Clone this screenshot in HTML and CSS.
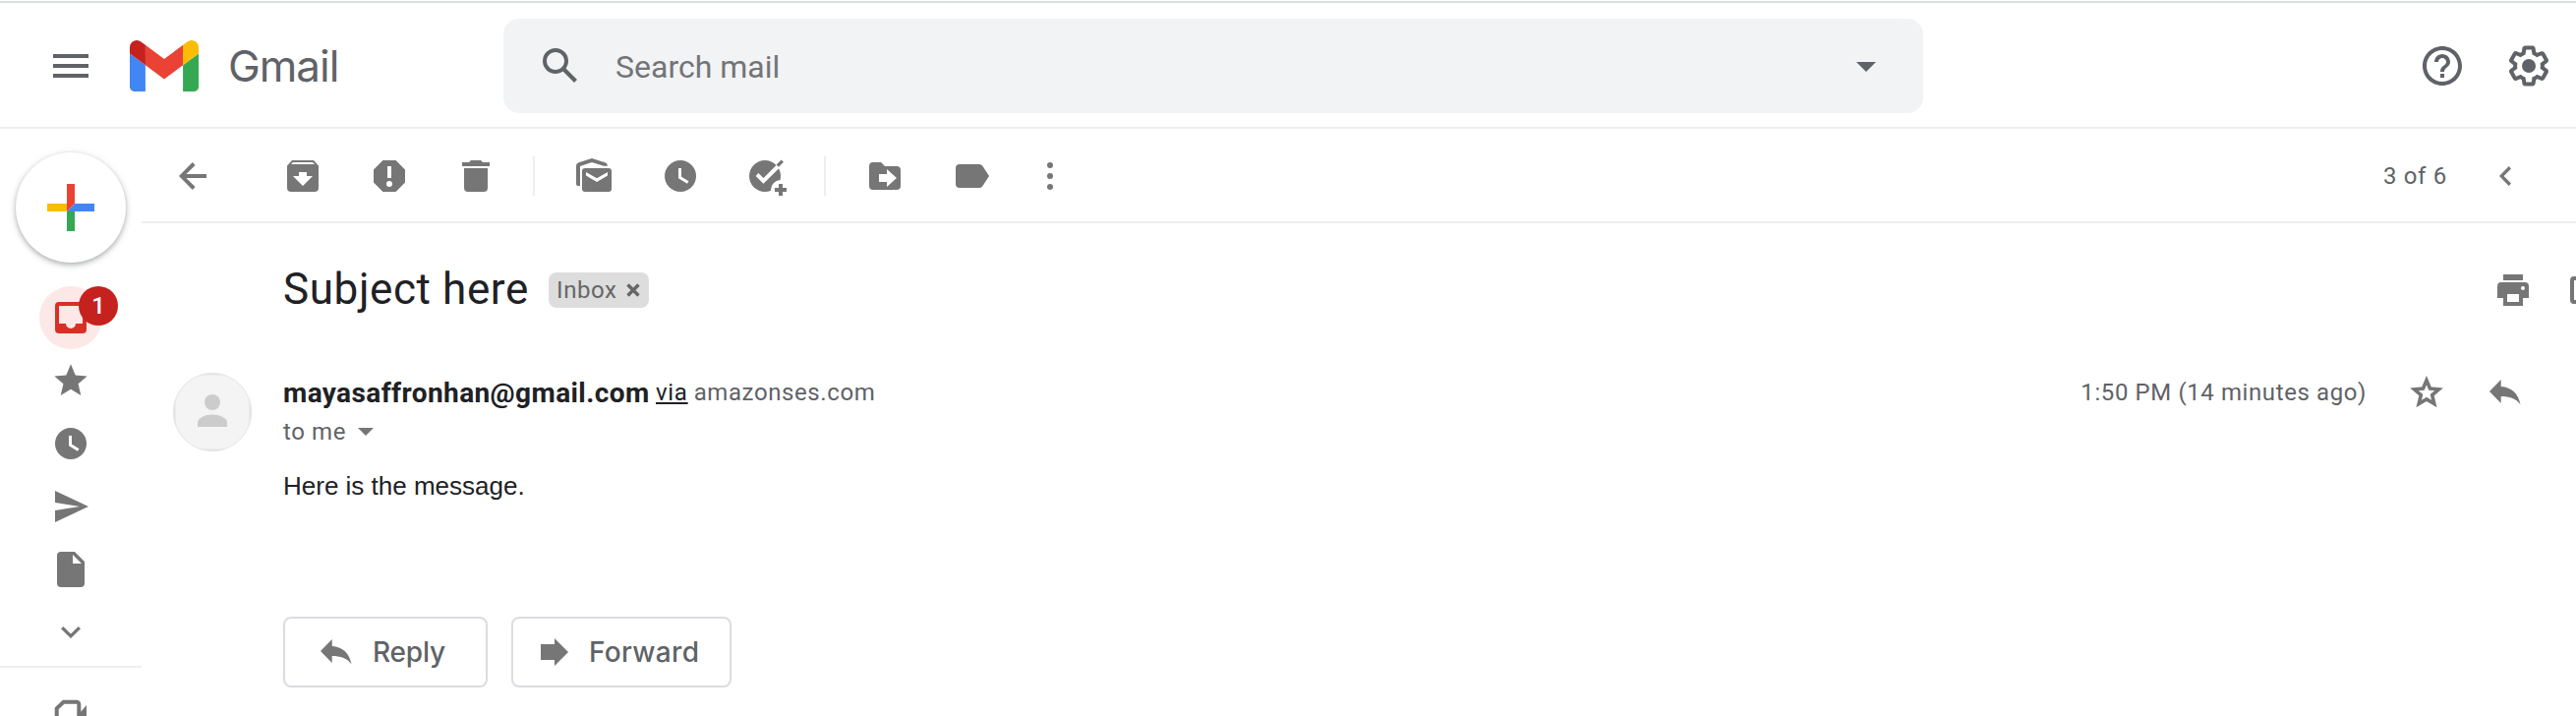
FILE: index.html
```html
<!DOCTYPE html>
<html lang="en">
<head>
<meta charset="utf-8">
<title>Gmail</title>
<link rel="stylesheet" href="styles.css">
</head>
<body>
<header class="topbar">
  <svg class="menu" viewBox="0 0 36 24"><path d="M0 0h36v4H0zM0 10h36v4H0zM0 20h36v4H0z"/></svg>
  <svg class="logo" viewBox="52 42 88 66" preserveAspectRatio="none">
    <path fill="#4285f4" d="M58 108h14V74L52 59v43c0 3.32 2.69 6 6 6"/>
    <path fill="#34a853" d="M120 108h14c3.32 0 6-2.69 6-6V59l-20 15"/>
    <path fill="#fbbc04" d="M120 48v26l20-15v-8c0-7.42-8.47-11.65-14.4-7.2"/>
    <path fill="#ea4335" d="M72 74V48l24 18 24-18v26L96 92"/>
    <path fill="#c5221f" d="M52 51v8l20 15V48l-5.6-4.2c-5.94-4.45-14.4-.22-14.4 7.2"/>
  </svg>
  <span class="brand">Gmail</span>
  <div class="search">
    <svg class="icon-lg" viewBox="0 0 24 24"><path d="M20.49 19l-5.73-5.73C15.53 12.2 16 10.91 16 9.5A6.5 6.5 0 1 0 9.5 16c1.41 0 2.7-.47 3.77-1.24L19 20.49 20.49 19zM5 9.5C5 7.01 7.01 5 9.5 5S14 7.01 14 9.5 11.99 14 9.5 14 5 11.99 5 9.5z"/></svg>
    <span class="placeholder">Search mail</span>
    <svg class="icon-lg" viewBox="0 0 24 24"><path d="M7 10l5 5 5-5z"/></svg>
  </div>
  <div class="top-actions">
    <svg class="icon-lg" viewBox="0 0 24 24"><path d="M11 18h2v-2h-2v2zm1-16C6.48 2 2 6.48 2 12s4.48 10 10 10 10-4.48 10-10S17.52 2 12 2zm0 18c-4.41 0-8-3.59-8-8s3.59-8 8-8 8 3.59 8 8-3.59 8-8 8zm0-14c-2.21 0-4 1.79-4 4h2c0-1.1.9-2 2-2s2 .9 2 2c0 2-3 1.75-3 5h2c0-2.25 3-2.5 3-5 0-2.21-1.79-4-4-4z"/></svg>
    <svg class="icon-lg" viewBox="0 0 24 24"><path d="M13.85 22.25h-3.7c-.74 0-1.36-.54-1.45-1.27l-.27-1.89c-.27-.14-.53-.29-.79-.46l-1.8.72c-.7.26-1.47-.03-1.81-.65L2.2 15.53c-.35-.66-.2-1.44.36-1.88l1.53-1.19c-.01-.15-.02-.3-.02-.46 0-.15.01-.31.02-.46l-1.52-1.19c-.59-.45-.74-1.26-.37-1.88l1.85-3.19c.34-.62 1.11-.9 1.79-.63l1.81.73c.26-.17.52-.32.78-.46l.27-1.91c.09-.7.71-1.25 1.44-1.25h3.7c.74 0 1.36.54 1.45 1.27l.27 1.89c.27.14.53.29.79.46l1.8-.72c.71-.26 1.48.03 1.82.65l1.84 3.18c.36.66.2 1.44-.36 1.88l-1.52 1.19c.01.15.02.3.02.46s-.01.31-.02.46l1.52 1.19c.56.45.72 1.23.37 1.86l-1.86 3.22c-.34.62-1.11.9-1.8.63l-1.8-.72c-.26.17-.52.32-.78.46l-.27 1.91c-.1.68-.72 1.22-1.46 1.22zm-3.23-2h2.76l.37-2.55.53-.22c.44-.18.88-.44 1.34-.78l.45-.34 2.38.96 1.38-2.4-2.03-1.58.07-.56c.03-.26.06-.51.06-.78s-.03-.53-.06-.78l-.07-.56 2.03-1.58-1.39-2.4-2.39.96-.45-.35c-.42-.32-.87-.58-1.33-.77l-.52-.22-.37-2.55h-2.76l-.37 2.55-.53.21c-.44.19-.88.44-1.34.79l-.45.33-2.38-.95-1.39 2.39 2.03 1.58-.07.56a7 7 0 0 0-.06.79c0 .26.02.53.06.78l.07.56-2.03 1.58 1.38 2.4 2.39-.96.45.35c.43.33.86.58 1.33.77l.53.22.38 2.55z"/><circle cx="12" cy="12" r="3.5"/></svg>
  </div>
</header>
<div class="shell">
  <nav class="rail">
    <div class="compose">
      <svg viewBox="0 0 48 48"><path fill="#fbbc04" d="M0 20h20v8H0z"/><path fill="#34a853" d="M20 28h8v20h-8z"/><path fill="#4285f4" d="M28 20h20v8H20z"/><path fill="#ea4335" d="M20 0h8v20l-8 8z"/></svg>
    </div>
    <div class="rail-item active">
      <svg class="icon" viewBox="0 0 40 40"><path d="M8 4h24a4 4 0 0 1 4 4v24a4 4 0 0 1-4 4H8a4 4 0 0 1-4-4V8a4 4 0 0 1 4-4zM8 8v18h7a5 5 0 0 0 10 0h7V8z"/></svg>
      <span class="badge">1</span>
    </div>
    <div class="rail-item"><svg class="icon" viewBox="0 0 24 24"><path d="M12 17.27L18.18 21l-1.64-7.03L22 9.24l-7.19-.61L12 2 9.19 8.63 2 9.24l5.46 4.73L5.82 21z"/></svg></div>
    <div class="rail-item"><svg class="icon" viewBox="0 0 40 40"><circle cx="20" cy="20" r="16"/><path class="cut" d="M19.5 12v9.5l8.2 5"/></svg></div>
    <div class="rail-item"><svg class="icon" viewBox="0 0 40 40"><path d="M4 4l34 16L4 36V24l25-4-25-4z"/></svg></div>
    <div class="rail-item"><svg class="icon" viewBox="0 0 40 40"><path d="M10 2h14l10 10v22a4 4 0 0 1-4 4H10a4 4 0 0 1-4-4V6a4 4 0 0 1 4-4zM22 5v9h9z"/></svg></div>
    <div class="rail-item"><svg class="icon" viewBox="0 0 40 40"><path d="M10 16.3 12.3 14l7.7 7.4 7.7-7.4 2.3 2.3L20 26z"/></svg></div>
    <div class="meet"><svg class="icon" viewBox="0 0 40 40"><path class="line" d="M5.7 34V12.4L12.6 5.8H26a2.3 2.3 0 0 1 2.3 2.3V34z"/><path d="M29 17l7-8v22l-7-7z"/></svg></div>
  </nav>
  <main class="content">
    <div class="toolbar">
      <svg class="icon back" viewBox="0 0 40 40"><path d="M6 20 19.8 6l2.8 2.9L13.4 18H34v4H13.4l9.2 9.1-2.8 2.9z"/></svg>
      <div class="group">
        <svg class="icon" viewBox="0 0 40 40"><path d="M9 4h22l5 5.5V32a4 4 0 0 1-4 4H8a4 4 0 0 1-4-4V9.5zM10 6 8 8h24l-2-2zM16 16v4h-6l10 10 10-10h-6v-4z"/></svg>
        <svg class="icon" viewBox="0 0 40 40"><path d="M13.4 4h13.2L36 13.4v13.2L26.6 36H13.4L4 26.6V13.4zM18 10v12h4V10zM20 25a3 3 0 1 0 0 6 3 3 0 0 0 0-6z"/></svg>
        <svg class="icon" viewBox="0 0 40 40"><path d="M6 6h7l2-2h10l2 2h7v4H6zM8 12h24v20a4 4 0 0 1-4 4H12a4 4 0 0 1-4-4z"/></svg>
      </div>
      <i class="divider"></i>
      <div class="group">
        <svg class="icon" viewBox="0 0 40 40"><path d="M2 28V9.5Q2 7 4.5 6.2L18 2l14 4.6q1.8.8 2 3.2h-4L18 6 6 10v20H4a2 2 0 0 1-2-2zM11 12h24a3 3 0 0 1 3 3v18a3 3 0 0 1-3 3H11a3 3 0 0 1-3-3V15a3 3 0 0 1 3-3zM12 16v3.6L23 26l11-6.4V16l-11 6.2z"/></svg>
        <svg class="icon" viewBox="0 0 40 40"><circle cx="20" cy="20" r="16"/><path class="cut" d="M19.5 12v9.5l8.2 5"/></svg>
        <svg class="icon" viewBox="0 0 40 40"><circle cx="18" cy="20" r="16"/><circle class="hole" cx="34" cy="34" r="10"/><path class="cut wide" d="M10 18.5l6.5 6.5L34 7.5"/><path class="line slim" d="M30.8 9.6l5-5"/><path d="M32 28h4v4h4v4h-4v4h-4v-4h-4v-4h4z"/></svg>
      </div>
      <i class="divider"></i>
      <div class="group">
        <svg class="icon" viewBox="0 0 40 40"><path d="M8 6h8l4 4h12a4 4 0 0 1 4 4v16a4 4 0 0 1-4 4H8a4 4 0 0 1-4-4V10a4 4 0 0 1 4-4zM22 13v5h-8v8h8v5l10-9z"/></svg>
        <svg class="icon" viewBox="0 0 40 40"><path d="M8 8h20q2 0 3.2 1.6L38 20l-6.8 10.4Q30 32 28 32H8a4 4 0 0 1-4-4V12a4 4 0 0 1 4-4z"/></svg>
      </div>
      <svg class="icon more" viewBox="0 0 40 40"><circle cx="20" cy="9" r="3"/><circle cx="20" cy="20" r="3"/><circle cx="20" cy="31" r="3"/></svg>
      <span class="count">3 of 6</span>
      <svg class="icon prev" viewBox="0 0 40 40"><path d="M24 12.4 21.7 10 12 20l9.7 10 2.3-2.4L16.6 20z"/></svg>
    </div>
    <div class="subject-row">
      <h1 class="subject">Subject here</h1>
      <span class="chip"><span class="chip-label">Inbox</span><svg class="chip-x" viewBox="0 0 14 14"><path d="M1.5 1.5l11 11M12.5 1.5l-11 11"/></svg></span>
      <div class="subject-actions">
        <svg class="icon" viewBox="0 0 40 40"><path d="M10 4h20v6H10zM8 12h24a4 4 0 0 1 4 4v12h-6v8H10v-8H4V16a4 4 0 0 1 4-4zM14 24v8h12v-8zM30 16a2 2 0 1 0 0 4 2 2 0 0 0 0-4z"/></svg>
        <svg class="icon" viewBox="0 0 40 40"><path class="line" d="M20 8H8a2 2 0 0 0-2 2v20a2 2 0 0 0 2 2h22V20"/></svg>
      </div>
    </div>
    <article class="message">
      <svg class="avatar" viewBox="0 0 80 80"><clipPath id="round"><circle cx="40" cy="40" r="40"/></clipPath><g clip-path="url(#round)"><path fill="#f4f4f4" stroke="#e3e3e3" stroke-width="5" d="M0 0h80v80H0z"/></g><circle cx="40" cy="40" r="39.5" fill="none" stroke="#e6e6e6"/><circle cx="40" cy="30" r="8" fill="#ccc"/><path fill="#ccc" d="M25 55v-4c0-5.5 8-8.500 15-8.500s15 3 15 8.500v4z"/></svg>
      <div class="message-main">
        <div class="from-row">
          <span class="sender">mayasaffronhan@gmail.com</span>
          <span class="via">via</span>
          <span class="domain">amazonses.com</span>
          <span class="time">1:50 PM (14 minutes ago)</span>
          <svg class="star" viewBox="0 0 36 35"><path d="M18 4.600l3.500 8.400 9 .8-6.800 5.900 2.100 8.900L18 23.900l-7.800 4.700 2.100-8.900-6.800-5.900 9-.8z"/></svg>
          <svg class="reply-icon" viewBox="0 0 32 26"><path d="M0 12 11.700 0v7C23 8 29 14 31.500 25.300 27 19 20 17 11.700 17v7z"/></svg>
        </div>
        <div class="to-row"><span class="to">to me</span><svg class="caret" viewBox="0 0 16 8"><path d="M0 0h16L8 8z"/></svg></div>
        <p class="body">Here is the message.</p>
        <div class="buttons">
          <button class="btn reply"><svg class="reply-icon" viewBox="0 0 32 26"><path d="M0 12 11.700 0v7C23 8 29 14 31.500 25.300 27 19 20 17 11.700 17v7z"/></svg><span>Reply</span></button>
          <button class="btn forward"><svg class="forward-icon" viewBox="0 0 28 28"><path d="M0 6h14V0l14 14-14 14v-6H0z"/></svg><span>Forward</span></button>
        </div>
      </div>
    </article>
  </main>
</div>
</body>
</html>
```
FILE: styles.css
```css
* { box-sizing: border-box; }
body {
  margin: 0;
  width: 2620px;
  height: 728px;
  overflow: hidden;
  background: #fff;
  color: #202124;
  font-family: Roboto, "Liberation Sans", sans-serif;
  font-size: 24px;
}
svg { display: block; flex: none; fill: #767676; fill-rule: evenodd; }
.icon { width: 40px; height: 40px; }
.icon-lg { width: 48px; height: 48px; fill: #5f6368; }
.cut { fill: none; stroke: #fff; stroke-width: 3; }
.cut.wide { stroke-width: 4; }
.hole { fill: #fff; }
.line { fill: none; stroke: #767676; stroke-width: 4; }
.line.slim { stroke-width: 3.4; }

.topbar {
  display: flex;
  align-items: center;
  height: 130px;
  margin-top: 1px;
  padding: 0 24px 0 54px;
  border-top: 2px solid #dadfe2;
  border-bottom: 2px solid #eee;
}
.menu { width: 36px; height: 24px; margin-top: 2px; fill: #5f6368; }
.logo { width: 70px; height: 52px; margin: 2px 0 0 42px; }
.brand {
  width: 181px;
  margin: 2px 99px 0 30px;
  color: #5f6368;
  font: 44px/56px Inter, sans-serif;
  letter-spacing: -1px;
}
.search {
  display: flex;
  align-items: center;
  width: 1444px;
  height: 96px;
  margin-top: 2px;
  padding: 0 34px;
  border-radius: 16px;
  background: #f1f3f4;
}
.placeholder { flex: 1; margin-left: 32px; padding-top: 2px; color: #727577; font-size: 32px; line-height: 40px; }
.top-actions { display: flex; gap: 40px; margin: 2px 0 0 auto; }

.shell { display: flex; height: 597px; }
.rail { width: 144px; flex: none; }
.compose {
  display: grid;
  place-items: center;
  width: 112px;
  height: 112px;
  margin: 24px 0 24px 16px;
  border-radius: 50%;
  box-shadow: 0 2px 4px rgba(60,64,67,.3), 0 2px 6px 2px rgba(60,64,67,.12);
}
.compose svg { width: 48px; height: 48px; }
.rail-item {
  position: relative;
  display: grid;
  place-items: center;
  width: 64px;
  height: 64px;
  margin-left: 40px;
}
.active { border-radius: 50%; background: #fce8e6; }
.active svg { fill: #d93025; }
.badge {
  position: absolute;
  left: 40px;
  top: 0;
  width: 40px;
  height: 40px;
  border-radius: 50%;
  background: #c5221f;
  color: #fff;
  font-weight: 500;
  line-height: 40px;
  text-align: center;
}
.meet { margin-top: 2px; padding: 29px 0 0 52px; border-top: 2px solid #eee; }

.content { flex: 1; min-width: 0; overflow: hidden; }
.toolbar {
  display: flex;
  align-items: center;
  height: 96px;
  padding: 2px 50px 0 32px;
  border-bottom: 2px solid #eee;
}
.group { display: flex; gap: 48px; }
.back { margin-right: 72px; }
.divider { width: 2px; height: 40px; margin: 0 40px 0 38px; background: #eee; }
.more { margin-left: 40px; }
.count { margin-left: auto; color: #5f6368; letter-spacing: .7px; }
.prev { margin-left: 41px; }

.subject-row { display: flex; align-items: center; height: 40px; margin: 48px 0 64px; padding-left: 144px; }
.subject { margin: 0; padding-bottom: 2px; width: 270px; font-size: 44px; font-weight: 400; line-height: 40px; letter-spacing: .6px; white-space: nowrap; }
.chip {
  display: flex;
  align-items: center;
  width: 102px;
  height: 36px;
  padding-left: 8px;
  border-radius: 8px;
  background: #ddd;
  color: #666;
}
.chip-label { width: 71px; letter-spacing: .6px; }
.chip-x { width: 14px; height: 14px; fill: none; stroke: #666; stroke-width: 3.4; }
.subject-actions { display: flex; gap: 34px; margin: 0 -30px 0 auto; }

.message { display: flex; padding-left: 32px; }
.avatar { width: 80px; height: 80px; }
.message-main { flex: 1; margin-left: 32px; }
.from-row { display: flex; align-items: center; height: 40px; padding-right: 56px; color: #5f6368; }
.sender { width: 379px; color: #202124; font-size: 28px; font-weight: 700; letter-spacing: .4px; }
.via { margin-right: 6px; color: #202124; letter-spacing: .7px; text-decoration: underline; }
.domain { letter-spacing: .6px; }
.time { margin-left: auto; letter-spacing: .6px; }
.star { width: 36px; height: 35px; margin: 0 46px 0 43px; fill: none; stroke: #767676; stroke-width: 3.6; }
.reply-icon { width: 32px; height: 26px; }
.to-row { display: flex; align-items: center; height: 40px; color: #5f6368; letter-spacing: .6px; }
.to { width: 76px; }
.caret { width: 16px; height: 8px; }
.body { margin: 19px 0 0; height: 149px; color: #202124; font: 26px/32px "Liberation Sans", sans-serif; }
.buttons { display: flex; gap: 24px; }
.btn {
  display: flex;
  align-items: center;
  height: 72px;
  padding: 0;
  border: 2px solid #dadce0;
  border-radius: 8px;
  background: #fff;
  color: #5f6368;
  font: 500 28px/36px Inter, sans-serif;
}
.reply { width: 208px; padding-left: 36px; gap: 21px; letter-spacing: -.2px; }
.forward { width: 224px; padding-left: 28px; gap: 21px; letter-spacing: .3px; }
.forward-icon { width: 28px; height: 28px; }
```
